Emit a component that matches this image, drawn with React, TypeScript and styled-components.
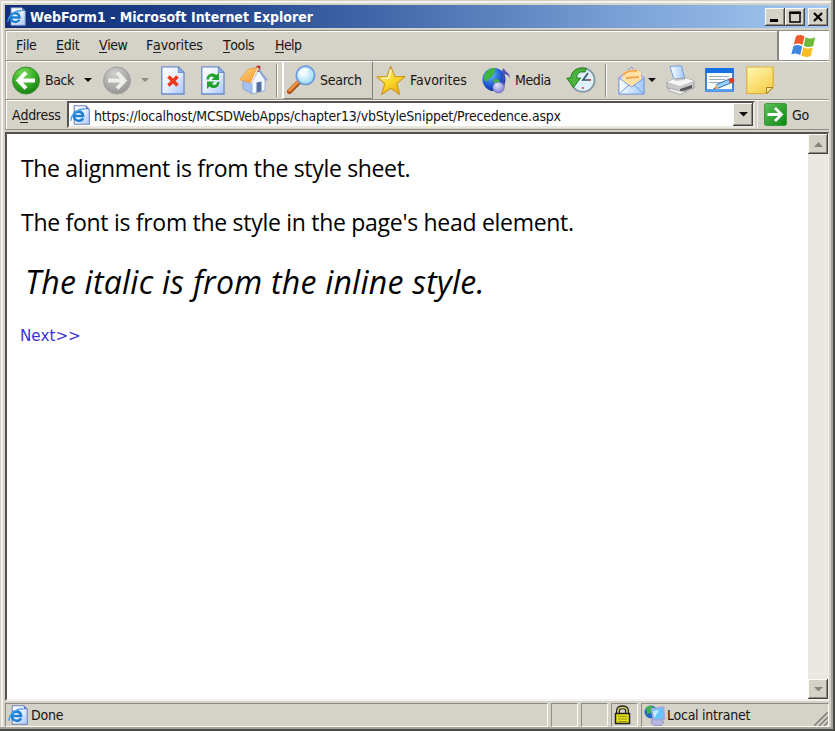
import React from "react";
import styled, { createGlobalStyle, css } from "styled-components";

const Global = createGlobalStyle`
  html, body { margin: 0; padding: 0; overflow: hidden; }
  *, *::before, *::after { box-sizing: border-box; }
  svg { display: block; flex: none; }
`;

const face = "#d5d2c8";
const ui = `"DejaVu Sans Condensed", "DejaVu Sans", sans-serif`;
const comic = `"Comic Sans MS", "Open Sans", sans-serif`;

const Window = styled.main`
  width: 835px;
  height: 731px;
  display: flex;
  flex-direction: column;
  padding: 5px 6px 4px 5px;
  background: ${face};
  font: 14px/18px ${ui};
  font-stretch: condensed;
  color: #151515;
  box-shadow: inset -2px -2px #4a4a48, inset -4px -4px #a6a39a, inset 1px 1px #d4d0c8, inset 3px 3px #f3f2ec;
`;

const Label = styled.span<{ $ls?: number }>`
  white-space: nowrap;
  letter-spacing: ${(p) => p.$ls ?? -0.25}px;
  u { text-decoration: none; border-bottom: 1px solid #222; display: inline-block; line-height: 14px; }
`;

const TitleBar = styled.header`
  height: 23px;
  flex: none;
  display: flex;
  align-items: center;
  padding: 0 1px 0 2px;
  background: linear-gradient(90deg, #12307a 0%, #1c3f88 22%, #4a70b0 50%, #7ba1d6 75%, #a6caf2 100%);
  color: #fff;
  font-weight: bold;
`;
const TitleText = styled(Label)`
  margin-left: 4px;
  flex: 1;
`;
const raised = css`
  background: ${face};
  box-shadow: inset -1px -1px #45433f, inset 1px 1px #fbfaf6, inset -2px -2px #8b8880;
`;
const CaptionButton = styled.button<{ $gap?: number }>`
  ${raised}
  width: 20px;
  height: 18px;
  padding: 0;
  border: 0;
  margin-left: ${(p) => p.$gap ?? 0}px;
  display: grid;
  place-items: center;
`;

const MenuBar = styled.nav`
  height: 31px;
  margin-top: 2px;
  flex: none;
  display: flex;
  align-items: center;
  border-top: 1px solid #918f88;
  border-bottom: 1px solid #918f88;
  border-left: 1px solid #aaa79e;
  box-shadow: inset 1px 1px #fff;
  padding-left: 10px;
`;
const MenuItem = styled(Label)<{ $w: number }>`
  width: ${(p) => p.$w}px;
  padding-bottom: 2px;
  flex: none;
`;
const Flag = styled.div`
  margin-left: auto;
  width: 52px;
  height: 29px;
  background: #fff;
  border-left: 2px solid #8a8880;
  display: grid;
  place-items: center;
`;

const ToolBar = styled.div`
  height: 39px;
  flex: none;
  display: flex;
  align-items: center;
  border-bottom: 1px solid #918f88;
  border-left: 1px solid #aaa79e;
  box-shadow: inset 1px 1px #fff;
  padding-left: 6px;
`;
const Tool = styled.div<{ $w: number }>`
  width: ${(p) => p.$w}px;
  flex: none;
  display: flex;
  align-items: center;
`;
const Arrow = styled.span<{ $gap: number }>`
  margin-left: ${(p) => p.$gap}px;
`;
const ToolText = styled(Label)<{ $gap: number }>`
  margin-left: ${(p) => p.$gap}px;
`;
const Hot = styled(Tool)`
  height: 38px;
  padding: 0 0 1px 3px;
  border: 1px solid;
  border-color: #fff #85827b #85827b #fff;
  border-left-width: 2px;
`;
const Rule = styled.i<{ $after: number }>`
  width: 2px;
  height: 33px;
  margin-right: ${(p) => p.$after}px;
  background: linear-gradient(90deg, #8a8880 50%, #fff 50%);
`;

const AddressBar = styled.div`
  height: 30px;
  flex: none;
  display: flex;
  align-items: center;
  border-bottom: 1px solid #918f88;
  border-left: 1px solid #aaa79e;
  box-shadow: inset 1px 1px #fff;
  padding-left: 6px;
`;
const AddressLabel = styled(Label)`
  width: 55px;
  flex: none;
`;
const Field = styled.div`
  width: 688px;
  height: 27px;
  display: flex;
  align-items: center;
  padding-left: 1px;
  background: #fff;
  border: 2px solid;
  border-color: #55534e #e9e7df #e9e7df #55534e;
`;
const Url = styled(Label)`
  margin-left: 4px;
  flex: 1;
  padding-top: 2px;
`;
const DropButton = styled.button`
  ${raised}
  width: 20px;
  height: 23px;
  border: 0;
  padding: 0;
  display: grid;
  place-items: center;
`;
const Go = styled.div`
  display: flex;
  align-items: center;
  height: 28px;
  margin-left: 2px;
  padding-left: 6px;
  border-left: 1px solid #efede6;
`;

const View = styled.section`
  height: 569px;
  margin-top: 2px;
  flex: none;
  display: flex;
  border: 2px solid;
  border-color: #55534e #f4f2ec #f4f2ec #55534e;
  border-right-width: 1px;
  background: #fff;
`;
const Doc = styled.article`
  flex: 1;
  padding: 17px 0 0 14px;
  color: #000;
  font-family: ${comic};
  font-stretch: normal;
`;
const Para = styled.p<{ $ls: number }>`
  margin: 0 0 20px;
  font-size: 23px;
  line-height: 34px;
  white-space: nowrap;
  letter-spacing: ${(p) => p.$ls}px;
`;
const Italic = styled(Para)`
  margin: 21px 0 22px 4px;
  font-size: 32px;
  line-height: 44px;
  font-style: italic;
`;
const Next = styled.a`
  display: block;
  margin-left: -1px;
  font: 15.2px/20px "DejaVu Sans", sans-serif;
  color: #3c34d2;
`;
const Scroll = styled.div`
  width: 20px;
  display: flex;
  flex-direction: column;
  justify-content: space-between;
  background: #eae8e0;
`;
const ScrollButton = styled(DropButton)`
  height: 20px;
`;

const StatusBar = styled.footer`
  flex: none;
  height: 26px;
  margin-top: 2px;
  display: flex;
  gap: 3px;
`;
const Panel = styled.div<{ $w?: number }>`
  ${(p) => (p.$w ? `width: ${p.$w}px; flex: none;` : "flex: 1;")}
  height: 24px;
  display: flex;
  align-items: center;
  padding-left: 2px;
  border: 1px solid;
  border-color: #8f8c84 #fbfaf6 #fbfaf6 #8f8c84;
`;
const StatusText = styled(Label)<{ $gap: number }>`
  margin-left: ${(p) => p.$gap}px;
`;
const Grip = styled.div`
  margin: 8px 0 0 auto;
`;

const Down = ({ c = "#111", w = 8 }: { c?: string; w?: number }) => (
  <svg width={w} height={w / 2} viewBox="0 0 8 4"><path d="M0 0h8L4 4z" fill={c} /></svg>
);

const HiddenSvg = styled.svg`
  position: absolute;
`;
const Defs = () => (
  <HiddenSvg width="0" height="0">
    <defs>
      <radialGradient id="green" cx=".4" cy=".25" r=".8"><stop offset="0" stopColor="#7edc5c" /><stop offset=".55" stopColor="#35ac25" /><stop offset="1" stopColor="#137a12" /></radialGradient>
      <radialGradient id="grey" cx=".4" cy=".25" r=".8"><stop offset="0" stopColor="#cfcfcd" /><stop offset="1" stopColor="#949492" /></radialGradient>
      <linearGradient id="sheet" x2="1" y2="1"><stop offset="0" stopColor="#fff" /><stop offset=".5" stopColor="#e6f0ff" /><stop offset="1" stopColor="#a6c4fb" /></linearGradient>
      <linearGradient id="roof" x2="1" y2="1"><stop offset="0" stopColor="#ffd98c" /><stop offset="1" stopColor="#f5921f" /></linearGradient>
      <radialGradient id="glass" cx=".4" cy=".4" r=".7"><stop offset="0" stopColor="#fff" /><stop offset="1" stopColor="#8fd4f6" /></radialGradient>
      <linearGradient id="star" x2=".6" y2="1"><stop offset="0" stopColor="#fff7a0" /><stop offset=".6" stopColor="#fbd92c" /><stop offset="1" stopColor="#eeb010" /></linearGradient>
      <radialGradient id="globe" cx=".35" cy=".3" r=".8"><stop offset="0" stopColor="#6db9ff" /><stop offset=".6" stopColor="#1a56cf" /><stop offset="1" stopColor="#0b2c8c" /></radialGradient>
      <radialGradient id="ball" cx=".4" cy=".3" r=".8"><stop offset="0" stopColor="#e4e4ff" /><stop offset="1" stopColor="#7070cc" /></radialGradient>
      <linearGradient id="note" x2=".7" y2="1"><stop offset="0" stopColor="#fff8b4" /><stop offset="1" stopColor="#f6cf4c" /></linearGradient>
      <linearGradient id="go" x2="1" y2="1"><stop offset="0" stopColor="#5cc35a" /><stop offset="1" stopColor="#0c8412" /></linearGradient>
      <linearGradient id="paper" x2="1"><stop offset="0" stopColor="#fff" /><stop offset="1" stopColor="#9cc8ff" /></linearGradient>
    </defs>
  </HiddenSvg>
);

const Round = ({ off }: { off?: boolean }) => (
  <svg width="28" height="29" viewBox="0 0 28 29">
    <circle cx="14" cy="14.5" r="13.5" fill={off ? "url(#grey)" : "url(#green)"} stroke={off ? "#a0a09c" : "#3b9432"} />
    <path transform={off ? "matrix(-1 0 0 1 28 0)" : undefined} d="M14 6.5 6.5 14.5l7.5 8M7 14.500h16" fill="none" stroke={off ? "#eeeeec" : "#fff"} strokeWidth="4" />
  </svg>
);
const Sheet = ({ children }: { children: React.ReactNode }) => (
  <svg width="24" height="29" viewBox="0 0 24 29">
    <path d="M.8.8h16.5L23 6.5V28H.8z" fill="url(#sheet)" stroke="#7089cd" strokeWidth="1.3" />
    <path d="M17.3.8v5.7H23z" fill="#8faef0" stroke="#5f80cc" strokeWidth=".8" />
    {children}
  </svg>
);
const Home = () => (
  <svg width="29" height="30" viewBox="0 0 29 30">
    <path d="M4 14v10l10 5V15z" fill="#a3c1f5" stroke="#7895cf" strokeWidth=".7" />
    <path d="M13 17 19.5 5 26 15v10.500L13 29z" fill="#f3f8ff" stroke="#8ca3ce" strokeWidth=".8" />
    <path d="M17.500.8h3.800v6h-3.800z" fill="#b9281e" />
    <path d="M9.500 4 19 2.500 11.500 18 .8 14.500z" fill="url(#roof)" stroke="#e3923c" strokeWidth=".7" />
    <path d="M19 3.500 28 15.500" stroke="#8da5d8" strokeWidth="2" /><path d="M19.200 3 12 18" stroke="#fff0d0" strokeWidth="1.200" />
    <path d="m17.500 17.500 5-1v9.800l-5 1.300z" fill="#55709f" />
  </svg>
);
const Magnifier = () => (
  <svg width="29" height="29" viewBox="0 0 29 29">
    <path d="m11.5 17.5-9 9" stroke="#a6511a" strokeWidth="5" strokeLinecap="round" />
    <path d="m11 17-8.5 8.5" stroke="#f09444" strokeWidth="2.6" strokeLinecap="round" />
    <circle cx="18.5" cy="10.3" r="9.2" fill="url(#glass)" stroke="#6b9ade" strokeWidth="1.7" />
    <path d="M12.8 9c1-3.5 5-5 8-3.8" fill="none" stroke="#fff" strokeWidth="2" />
  </svg>
);
const Star = () => (
  <svg width="30" height="31" viewBox="0 0 30 31">
    <path d="M14.8 1.2 18.600 11.300 29 11.600l-8.200 7 3 10.800-9-6.100-9.200 6.100L8.800 18.600.8 11.800l10.400-.5z" fill="url(#star)" stroke="#d09a24" strokeWidth="1.2" strokeLinejoin="round" />
    <path d="M14.800 4.500 12.500 13l-7 .3" fill="none" stroke="#fffbd8" strokeWidth="1.6" opacity=".8" />
  </svg>
);
const Media = () => (
  <svg width="29" height="27" viewBox="0 0 29 27">
    <circle cx="12" cy="12.5" r="11.5" fill="url(#globe)" />
    <path d="M4 6c2-4 6-5.500 9-5 1 2-1 3-1 5-1 2-2 5-5 5-1 2-2 4-4 3-2-3-1-6 1-8zM11 13c3-2 6-1 7 2l-3 5c-2 0-3-4-4-7z" fill="#42b53b" />
    <path d="M21.500 2v18" stroke="#4c4cae" strokeWidth="2" />
    <path d="M21 1c2 4 7 4 7 11-1-4-4-5-7-5z" fill="#5050b4" />
    <ellipse cx="16.500" cy="20.500" rx="5.700" ry="5.500" fill="url(#ball)" stroke="#6868bc" strokeWidth=".6" />
  </svg>
);
const History = () => (
  <svg width="30" height="28" viewBox="0 0 30 28">
    <circle cx="16.800" cy="14" r="11.800" fill="#dff1fa" stroke="#8a9ba6" strokeWidth="2" />
    <path d="M16.800 5v1.500M16.800 21v2M25 14h-2" stroke="#e0503a" strokeWidth="1.8" />
    <path d="m22 7-5 7h6" fill="none" stroke="#35506a" strokeWidth="1.6" />
    <path d="M20.500 2.500C11 .5 5.500 5 4.800 12H.8l6.700 9.500L14.500 12h-4c.5-5 4-7 8.500-6z" fill="#49b33b" stroke="#217f20" strokeWidth="1" />
  </svg>
);
const Mail = () => (
  <svg width="27" height="29" viewBox="0 0 27 29">
    <path d="M1 11.500 13.500 1 26 11.500V28H1z" fill="#c9c6ef" stroke="#8f91cd" />
    <path d="M5 8c3-5 13-7 18-1v8l-9.500 6L4 15z" fill="#ffe2a4" />
    <path d="M5 9c4-4 9-5 14-4M8 12l13-1" stroke="#f3a64c" strokeWidth="1.8" fill="none" />
    <path d="m1 12 12.500 9L26 12v16H1z" fill="url(#paper)" stroke="#7f9cdd" />
    <path d="m1 28 10-9M26 28l-10-9" stroke="#6f9ae0" />
  </svg>
);
const Printer = () => (
  <svg width="29" height="30" viewBox="0 0 29 30">
    <path d="M4 1.500 15.500.8 19 15 8.500 16z" fill="url(#paper)" stroke="#6b98de" strokeWidth=".9" />
    <path d="m1 17 7-3 12-1 8 3v7l-14 5-13-5z" fill="#c9c9ca" stroke="#929298" strokeWidth=".8" />
    <path d="m1 17 7-3 1.500 2 9-1 1-2 8.500 3-14 5z" fill="#f6f6f6" />
    <path d="m14 24 12-4v3l-12 4z" fill="#55555a" />
    <path d="m3 23 11 3 7 .5-7 3-11-4z" fill="#efefef" stroke="#98989d" strokeWidth=".7" />
  </svg>
);
const EditIcon = () => (
  <svg width="30" height="26" viewBox="0 0 30 26">
    <path d="M1 2h27v22H1z" fill="#f7fbff" stroke="#1d67ce" strokeWidth="1.6" />
    <path d="M.5 1h28v5H.5z" fill="#1672e4" /><path d="M1 22h27v2.500H1z" fill="#58a1f0" />
    <path d="M4 9.500h20M4 12.500h16M4 15.500h12" stroke="#a3adb8" />
    <path d="m12 19.500 13-5.500" stroke="#2166ba" strokeWidth="5" /><path d="m12 19.500 13-5.500" stroke="#9bd3ff" strokeWidth="3" />
    <path d="m8.500 22 3-4 1.700 3.500z" fill="#e9a54f" /><path d="M8.200 22.300 10 20.500l.5 1z" fill="#222" />
    <circle cx="26.500" cy="13.500" r="2.800" fill="#d5422c" />
  </svg>
);
const Note = () => (
  <svg width="28" height="29" viewBox="0 0 28 29">
    <path d="M.8 1h26.400v20L21 27.500H.8z" fill="url(#note)" stroke="#dcae3c" strokeWidth="1.2" />
    <path d="M20.500 27.500v-6h6.500z" fill="#fbe894" stroke="#a8822a" strokeWidth="1" />
  </svg>
);
const IeIcon = ({ s = 19 }: { s?: number }) => (
  <svg width={s} height={s} viewBox="0 0 19 19">
    <path d="M4 .7h11l3.300 3.300v14.300H4z" fill="url(#sheet)" stroke="#6d82bd" />
    <path d="M15 .7V4h3.300z" fill="#5e7cc0" />
    <path d="M4.200 10.500h8.300C12 5 4 4.800 3.700 10.500c0 5 6.800 5.800 8.700 2.300" fill="none" stroke="#1f7fd0" strokeWidth="2.400" />
    <path d="M1 15C.5 9 9 2.500 14.500 4" fill="none" stroke="#3b9ce6" strokeWidth="1.300" />
  </svg>
);
const WinFlag = () => (
  <svg width="26" height="24" viewBox="0 0 26 24">
    <path d="M5 2c3-1.600 6-1.400 8.500.5l-2 8.500C9 9.300 6 9.200 2.800 10.500z" fill="#ee5a29" />
    <path d="M14.700 3c3 2 6 2 9.500.3l-2 8.700c-3.500 1.500-6.500 1.500-9.500-.5z" fill="#6fba38" />
    <path d="M2.500 12c3-1.600 6-1.200 8.700.5l-2 8.500C6.500 19.200 3.500 19 .3 20.500z" fill="#3f87dc" />
    <path d="M12.400 13c3 2 6 2 9.400.4l-2 8.500c-3.500 1.500-6.500 1.500-9.500-.4z" fill="#f9bd20" />
  </svg>
);
const GoIcon = () => (
  <svg width="23" height="23" viewBox="0 0 23 23">
    <rect x=".5" y=".5" width="22" height="22" rx="2" fill="url(#go)" stroke="#3c9a3d" />
    <path d="M3.500 11.500h13M11 5l6.500 6.500L11 18" fill="none" stroke="#fff" strokeWidth="2.8" />
  </svg>
);
const Lock = () => (
  <svg width="17" height="20" viewBox="0 0 17 20">
    <path d="M4 9V5.500C4 1 13 1 13 5.500V9" fill="none" stroke="#222" strokeWidth="4" />
    <path d="M4 9V5.500C4 1.500 13 1.500 13 5.500V9" fill="none" stroke="#d8d46a" strokeWidth="1.6" />
    <path d="M1.500 8.500h14v10h-14z" fill="#e9e31c" stroke="#222" strokeWidth="1.5" />
    <path d="M4 11.500h9M4 14h9M4 16.500h9" stroke="#8d8a14" strokeWidth=".9" />
  </svg>
);
const Intranet = () => (
  <svg width="21" height="21" viewBox="0 0 21 21">
    <path d="M8 14h8l4 3-3 3.500H10L7 18z" fill="#b5b7df" stroke="#8183ba" strokeWidth=".7" />
    <circle cx="7" cy="7" r="6.500" fill="#2467c6" /><path d="M2 3c3-3 7-2 8 0L7 8 3 9z" fill="#3bb344" />
    <path d="m7.500 4 12-2 .8 12L9.500 15z" fill="#66c5fa" stroke="#a4a6e0" strokeWidth="1.600" />
    <path d="m9 6 6-1-4 7-1 1z" fill="#c6efff" />
  </svg>
);

const menus: [string, string, string, number, number][] = [
  ["", "F", "ile", 40, -0.4],
  ["", "E", "dit", 43, -0.2],
  ["", "V", "iew", 47, -0.5],
  ["F", "a", "vorites", 77, -0.15],
  ["", "T", "ools", 52, -0.4],
  ["", "H", "elp", 40, -0.6],
];

export default function App() {
  return (
    <Window>
      <Global />
      <Defs />
      <TitleBar>
        <IeIcon />
        <TitleText $ls={0}>WebForm1 - Microsoft Internet Explorer</TitleText>
        <CaptionButton><svg width="10" height="10"><path d="M0 7h8v3H0z" /></svg></CaptionButton>
        <CaptionButton><svg width="12" height="12"><path d="M1 1.500h10M1 1v10h10V1" fill="none" stroke="#000" strokeWidth="1.5" /><path d="M.3.500h11.400v2.500H.3z" /></svg></CaptionButton>
        <CaptionButton $gap={3}><svg width="10" height="10"><path d="m1 1 8 8M9 1 1 9" stroke="#000" strokeWidth="2.2" /></svg></CaptionButton>
      </TitleBar>
      <MenuBar>
        {menus.map(([a, k, b, w, ls]) => (
          <MenuItem key={k} $w={w} $ls={ls}>{a}<u>{k}</u>{b}</MenuItem>
        ))}
        <Flag><WinFlag /></Flag>
      </MenuBar>
      <ToolBar>
        <Tool $w={91}><Round /><ToolText $gap={5} $ls={-0.4}>Back</ToolText><Arrow $gap={10}><Down /></Arrow></Tool>
        <Tool $w={58}><Round off /><Arrow $gap={10}><Down c="#8d8b85" /></Arrow></Tool>
        <Tool $w={40}><Sheet><path d="m7.500 10.500 9 9M16.500 10.500l-9 9" stroke="#ee3a1c" strokeWidth="3.6" /></Sheet></Tool>
        <Tool $w={38}><Sheet>
          <path d="M5.500 13.500c0-5.500 6-8 10-4.500l2.500-2.500v7.500h-7.500l2.500-2.500c-3-2-5-.5-5 2zM18.500 16c0 5.500-6 8-10 4.500L6 23v-7.500h7.500L11 18c3 2 5 .5 5-2z" fill="#23a02c" />
        </Sheet></Tool>
        <Tool $w={37}><Home /></Tool>
        <Rule $after={4} />
        <Hot $w={91}><Magnifier /><ToolText $gap={4}>Search</ToolText></Hot>
        <Tool $w={109}><Arrow $gap={3}><Star /></Arrow><ToolText $gap={4} $ls={0}>Favorites</ToolText></Tool>
        <Tool $w={84}><Media /><ToolText $gap={4} $ls={-0.4}>Media</ToolText></Tool>
        <Tool $w={39}><History /></Tool>
        <Rule $after={11} />
        <Tool $w={48}><Mail /><Arrow $gap={3}><Down /></Arrow></Tool>
        <Tool $w={39}><Printer /></Tool>
        <Tool $w={41}><EditIcon /></Tool>
        <Note />
      </ToolBar>
      <AddressBar>
        <AddressLabel>A<u>d</u>dress</AddressLabel>
        <Field><IeIcon s={20} /><Url $ls={-0.205}>https://localhost/MCSDWebApps/chapter13/vbStyleSnippet/Precedence.aspx</Url><DropButton><Down w={9} /></DropButton></Field>
        <Go><GoIcon /><ToolText $gap={5}>Go</ToolText></Go>
      </AddressBar>
      <View>
        <Doc>
          <Para $ls={-0.33}>The alignment is from the style sheet.</Para>
          <Para $ls={-0.29}>The font is from the style in the page's head element.</Para>
          <Italic $ls={0.24}>The italic is from the inline style.</Italic>
          <Next>Next&gt;&gt;</Next>
        </Doc>
        <Scroll>
          <ScrollButton><svg width="9" height="5"><path d="M0 5h9L4.500 0z" fill="#85837c" /></svg></ScrollButton>
          <ScrollButton><Down c="#85837c" w={9} /></ScrollButton>
        </Scroll>
      </View>
      <StatusBar>
        <Panel $w={543}><IeIcon s={20} /><StatusText $gap={3}>Done</StatusText></Panel>
        <Panel $w={27} />
        <Panel $w={27} />
        <Panel $w={27}><Lock /></Panel>
        <Panel><Intranet /><StatusText $gap={2}>Local intranet</StatusText>
          <Grip><svg width="14" height="14"><path d="M0 14 14 0M5 14l9-9M10 14l4-4" stroke="#85837c" strokeWidth="1.6" /></svg></Grip>
        </Panel>
      </StatusBar>
    </Window>
  );
}
